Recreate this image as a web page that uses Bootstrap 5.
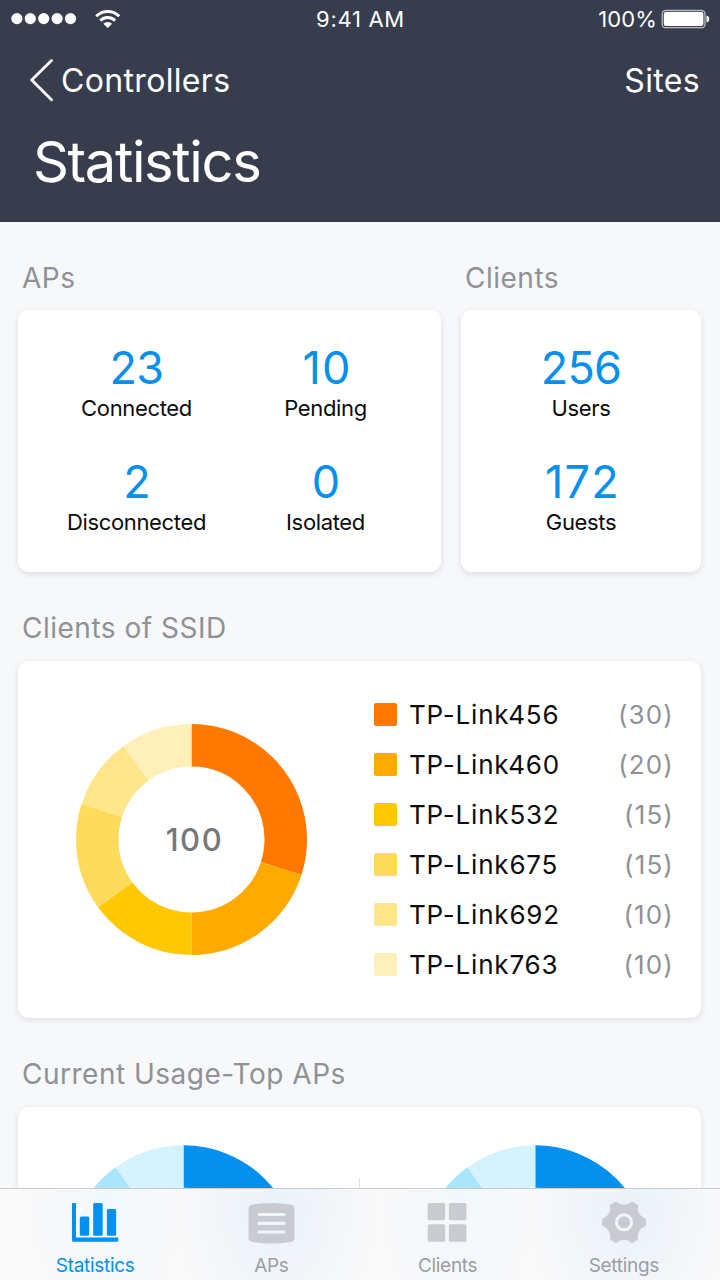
<!DOCTYPE html>
<html lang="en">
<head>
<meta charset="utf-8">
<meta name="viewport" content="width=device-width, initial-scale=1">
<title>Statistics</title>
<link href="https://cdn.jsdelivr.net/npm/bootstrap@5.3.0/dist/css/bootstrap.min.css" rel="stylesheet">
<style>
  body { background: #f7f8fa; color: #0c0c0e; font-family: Inter, "Liberation Sans", sans-serif; }
  .screen { width: 720px; height: 1280px; }
  .top-area { background: #373d4d; height: 222px; flex: none; }
  .status-row { height: 38px; font-size: 22px; line-height: 38px; padding: 0 10px 0 11px; }
  .status-row > div { flex: 1 1 0; }
  .clock-text { letter-spacing: .7px; }
  .battery-text { letter-spacing: .1px; }
  .nav-row { height: 84px; font-size: 32px; line-height: 82px; padding: 2px 20px 0 30px; letter-spacing: .34px; }
  .back-label { margin-left: 7px; }
  .page-title { font-size: 56px; line-height: 80px; letter-spacing: -1.35px; padding-left: 33px; font-weight: 400; }
  .content { padding: 0 19px 0 18px; }
  .section-title { font-size: 28px; line-height: 67px; height: 66px; margin: 23px 0 0; padding-left: 4px; color: #8f9196; font-weight: 400; letter-spacing: .5px; }
  .first-title { margin-top: 22px; line-height: 68px; }
  .panel { border: 0; border-radius: 11px; background: #fff; box-shadow: 0 2px 6px rgba(40, 45, 60, .13); }
  .aps-col { width: 423px; }
  .clients-col { width: 240px; }
  .stat-panel { height: 262px; padding-top: 29px; }
  .aps-panel { padding-left: 24px; padding-right: 21px; }
  .stat-cell { height: 113.5px; }
  .stat-num { font-size: 45px; line-height: 57px; color: #0490ec; letter-spacing: -.7px; }
  .stat-num.has-one { letter-spacing: 1.2px; padding-left: 3px; }
  .stat-label { font-size: 22px; line-height: 26px; margin-top: -1px; letter-spacing: -.35px; }
  .ssid-panel { height: 357px; padding: 29px 28px 0 58px; }
  .donut-box { width: 231px; height: 231px; margin-top: 34px; }
  .donut-total { font-size: 31px; font-weight: 500; color: #77787b; letter-spacing: 1.6px; padding-left: 6px; }
  .legend-box { width: 299px; margin-top: -1px; }
  .legend-row { height: 50px; font-size: 26px; }
  .swatch { width: 23px; height: 23px; border-radius: 2px; margin-right: 12px; }
  .legend-name { letter-spacing: .8px; }
  .legend-count { color: #8f9196; letter-spacing: 1.15px; margin-right: -1px; }
  .usage-panel { height: 300px; padding-top: 38px; }
  .tab-strip { height: 92px; border-top: 1px solid #cacbd0; padding: 0 8px 0 7px; z-index: 5;
    background:
      radial-gradient(ellipse 100px 130px at 275px 20px, #e9f2f9 0, rgba(233,242,249,0) 100%),
      radial-gradient(ellipse 100px 130px at 627px 20px, #e9f2f9 0, rgba(233,242,249,0) 100%),
      radial-gradient(ellipse 80px 110px at 105px 20px, #f1f8fc 0, rgba(241,248,252,0) 100%),
      radial-gradient(ellipse 80px 110px at 457px 20px, #f1f8fc 0, rgba(241,248,252,0) 100%),
      #f9f9fa; }
  .tab-item { flex: 1 1 0; padding-top: 11px; color: #9b9ea5; font-size: 19px; text-decoration: none; letter-spacing: -.3px; }
  .tab-item svg { fill: #c8cbd0; flex: none; }
  .tab-item.active { color: #0490ec; }
  .tab-item.active svg { fill: #0490ec; }
  .tab-label { line-height: 24px; margin-top: 10px; }
</style>
</head>
<body>
<div class="screen d-flex flex-column position-relative overflow-hidden">
  <header class="top-area text-white">
    <div class="status-row d-flex align-items-center">
      <div class="d-flex align-items-center">
        <svg width="112" height="38" viewBox="11 0 112 38" fill="#fff">
          <circle cx="16.9" cy="18.6" r="5.6"/><circle cx="30.3" cy="18.6" r="5.6"/><circle cx="43.7" cy="18.6" r="5.6"/><circle cx="57.1" cy="18.6" r="5.6"/><circle cx="70.5" cy="18.6" r="5.6"/>
          <g fill="none" stroke="#fff" stroke-width="2.9">
            <path d="M96.200 16.300A16.300 16.300 0 0 1 119.200 16.300"/>
            <path d="M100.300 20.600A10.500 10.500 0 0 1 115.100 20.600"/>
          </g>
          <path d="M103.300 23.800a6.400 6.400 0 0 1 8.800 0L107.700 28z"/>
        </svg>
      </div>
      <div class="text-center clock-text">9:41 AM</div>
      <div class="d-flex align-items-center justify-content-end">
        <span class="battery-text">100%</span>
        <svg class="ms-1" width="49" height="20" viewBox="661.500 8.500 49 20">
          <rect x="662.700" y="10" width="42.800" height="17.200" rx="3.500" fill="none" stroke="#b9bcc3" stroke-width="1.300"/>
          <rect x="664.300" y="11.600" width="39.600" height="14" rx="2" fill="#fff"/>
          <path d="M707 15.300q2.800.4 2.800 3.300t-2.800 3.300z" fill="#fff"/>
        </svg>
      </div>
    </div>
    <nav class="nav-row d-flex justify-content-between align-items-center">
      <div class="d-flex align-items-center">
        <svg width="24" height="44" viewBox="0 1 24 44" fill="none" stroke="#fff" stroke-width="2.800" stroke-linecap="round" stroke-linejoin="round"><path d="M21.500 2.500 1.700 22l19.800 19.700"/></svg>
        <span class="back-label">Controllers</span>
      </div>
      <span>Sites</span>
    </nav>
    <h1 class="page-title m-0">Statistics</h1>
  </header>

  <main class="content">
    <div class="d-flex justify-content-between">
      <section class="aps-col">
        <h2 class="section-title first-title">APs</h2>
        <div class="card panel stat-panel aps-panel">
          <div class="row g-0 text-center">
            <div class="col-6 stat-cell"><div class="stat-num">23</div><div class="stat-label">Connected</div></div>
            <div class="col-6 stat-cell"><div class="stat-num has-one">10</div><div class="stat-label">Pending</div></div>
            <div class="col-6 stat-cell"><div class="stat-num">2</div><div class="stat-label">Disconnected</div></div>
            <div class="col-6 stat-cell"><div class="stat-num">0</div><div class="stat-label">Isolated</div></div>
          </div>
        </div>
      </section>
      <section class="clients-col">
        <h2 class="section-title first-title">Clients</h2>
        <div class="card panel stat-panel text-center">
          <div class="stat-cell"><div class="stat-num">256</div><div class="stat-label">Users</div></div>
          <div class="stat-cell"><div class="stat-num has-one">172</div><div class="stat-label">Guests</div></div>
        </div>
      </section>
    </div>

    <section>
      <h2 class="section-title">Clients of SSID</h2>
      <div class="card panel ssid-panel flex-row justify-content-between align-items-start">
        <div class="donut-box d-grid position-relative">
          <svg width="231" height="231" viewBox="-115.500 -115.500 231 231" fill="none" stroke-width="42.500">
            <g transform="rotate(-90)">
              <circle r="94.250" pathLength="100" stroke="#ff7800" stroke-dasharray="30 70"/>
              <circle r="94.250" pathLength="100" stroke="#ffaa00" stroke-dasharray="20 80" stroke-dashoffset="-30"/>
              <circle r="94.250" pathLength="100" stroke="#ffc800" stroke-dasharray="15 85" stroke-dashoffset="-50"/>
              <circle r="94.250" pathLength="100" stroke="#ffdb5c" stroke-dasharray="15 85" stroke-dashoffset="-65"/>
              <circle r="94.250" pathLength="100" stroke="#ffe68a" stroke-dasharray="10 90" stroke-dashoffset="-80"/>
              <circle r="94.250" pathLength="100" stroke="#ffefb8" stroke-dasharray="10 90" stroke-dashoffset="-90"/>
            </g>
          </svg>
          <div class="donut-total position-absolute top-50 start-50 translate-middle">100</div>
        </div>
        <div class="legend-box">
          <div class="legend-row d-flex align-items-center"><span class="swatch" style="background:#ff7800"></span><span class="legend-name">TP-Link456</span><span class="legend-count ms-auto">(30)</span></div>
          <div class="legend-row d-flex align-items-center"><span class="swatch" style="background:#ffaa00"></span><span class="legend-name">TP-Link460</span><span class="legend-count ms-auto">(20)</span></div>
          <div class="legend-row d-flex align-items-center"><span class="swatch" style="background:#ffc800"></span><span class="legend-name">TP-Link532</span><span class="legend-count ms-auto">(15)</span></div>
          <div class="legend-row d-flex align-items-center"><span class="swatch" style="background:#ffdb5c"></span><span class="legend-name">TP-Link675</span><span class="legend-count ms-auto">(15)</span></div>
          <div class="legend-row d-flex align-items-center"><span class="swatch" style="background:#ffe68a"></span><span class="legend-name">TP-Link692</span><span class="legend-count ms-auto">(10)</span></div>
          <div class="legend-row d-flex align-items-center"><span class="swatch" style="background:#ffefb8"></span><span class="legend-name">TP-Link763</span><span class="legend-count ms-auto">(10)</span></div>
        </div>
      </div>
    </section>

    <section>
      <h2 class="section-title">Current Usage-Top APs</h2>
      <div class="card panel usage-panel">
        <svg width="683" height="231" viewBox="18 1145 683 231" fill="none">
          <defs>
            <g id="usage" transform="rotate(-90)" stroke-width="42.500">
              <circle r="94.250" pathLength="100" stroke="#0490ec" stroke-dasharray="30 70"/>
              <circle r="94.250" pathLength="100" stroke="#a9e5ff" stroke-dasharray="10 90" stroke-dashoffset="-80"/>
              <circle r="94.250" pathLength="100" stroke="#d5f2ff" stroke-dasharray="10 90" stroke-dashoffset="-90"/>
            </g>
          </defs>
          <use href="#usage" x="183.500" y="1260.800"/>
          <use href="#usage" x="535.300" y="1260.800"/>
          <path d="M359.500 1178v100" stroke="#e2e3e6"/>
        </svg>
      </div>
    </section>
  </main>

  <nav class="tab-strip position-absolute bottom-0 start-0 end-0 d-flex">
    <a class="tab-item active d-flex flex-column align-items-center" href="#">
      <svg width="48" height="44" viewBox="71 1200 48 44">
        <path d="M73 1203h2.200a.8.8 0 0 1 .8.800v33.700h41.500a.8.8 0 0 1 .8.800v2.200a1.300 1.300 0 0 1-1.300 1.300H73.500a1.500 1.500 0 0 1-1.500-1.500V1204a1 1 0 0 1 1-1z"/>
        <rect x="79.800" y="1216.500" width="9.400" height="19.300" rx="1.500"/><rect x="93.200" y="1203" width="9.500" height="32.800" rx="1.500"/><rect x="106.900" y="1209" width="9.200" height="26.800" rx="1.500"/>
        <circle cx="82" cy="1209" r="2.200" fill="#fff"/>
      </svg>
      <span class="tab-label">Statistics</span>
    </a>
    <a class="tab-item d-flex flex-column align-items-center" href="#">
      <svg width="48" height="44" viewBox="247.500 1200 48 44">
        <path d="M253 1204.500q19-3 38 0 4 .6 4 4.500v28.500q0 3.900-4 4.500-19 3-38 0-4-.6-4-4.500V1209q0-3.900 4-4.500z"/>
        <path d="M259.500 1214.500h25M259.500 1223.300h25M259.500 1232h25" stroke="#f1f6fa" stroke-width="3.200" stroke-linecap="round"/>
      </svg>
      <span class="tab-label">APs</span>
    </a>
    <a class="tab-item d-flex flex-column align-items-center" href="#">
      <svg width="48" height="44" viewBox="424 1200 48 44">
        <rect x="427.700" y="1203" width="17.500" height="17.200" rx="1.500"/><rect x="448.900" y="1203" width="17.500" height="17.200" rx="1.500"/><rect x="427.700" y="1224.200" width="17.500" height="17.500" rx="1.500"/><rect x="448.900" y="1224.200" width="17.500" height="17.500" rx="1.500"/>
      </svg>
      <span class="tab-label">Clients</span>
    </a>
    <a class="tab-item d-flex flex-column align-items-center" href="#">
      <svg width="48" height="44" viewBox="-24 -22.300 48 44">
        <path stroke="#c8cbd0" stroke-width="1" stroke-linejoin="round" d="M21.500-3.200V3.200A11.500 11.500 0 0 0 13.600 17L8 20.300A11.500 11.500 0 0 0-8 20.300L-13.600 17A11.500 11.500 0 0 0-21.500 3.200V-3.200A11.500 11.500 0 0 0-13.600-17L-8-20.300A11.500 11.500 0 0 0 8-20.300L13.600-17A11.500 11.500 0 0 0 21.500-3.200z"/>
        <circle r="7.500" fill="none" stroke="#f1f6fa" stroke-width="3"/>
      </svg>
      <span class="tab-label">Settings</span>
    </a>
  </nav>
</div>
<script src="https://cdn.jsdelivr.net/npm/bootstrap@5.3.0/dist/js/bootstrap.bundle.min.js"></script>
</body>
</html>
